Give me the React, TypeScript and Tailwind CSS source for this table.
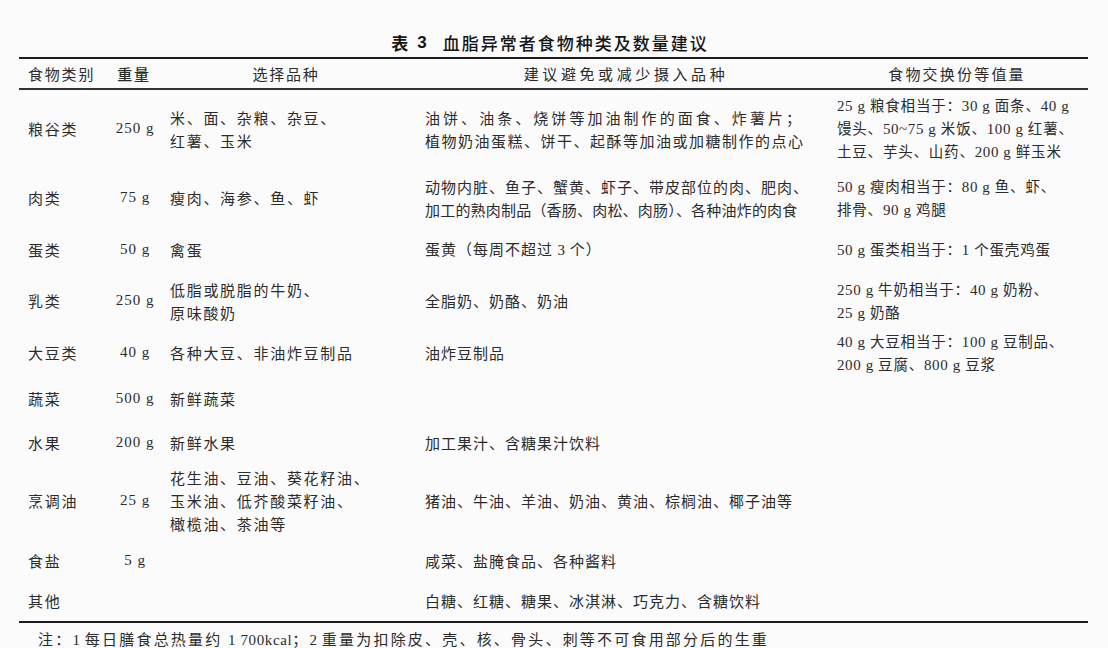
import React from "react";

type L = string | [string, string];

function T({ s }: { s: string }) {
  const parts = s.split(/([0-9][0-9~a-z ]*)/);
  return (
    <>
      {parts.map((p, i) =>
        i % 2 === 1 ? (
          <span key={i} className="font-['Liberation_Serif',serif] text-[15px] tracking-[0.6px]">
            {p}
          </span>
        ) : (
          <span key={i}>{p}</span>
        )
      )}
    </>
  );
}

type Row = {
  h: string;
  cat: string;
  w: string;
  sel: L[];
  av: L[];
  ex: L[];
};

const rows: Row[] = [
  {
    h: "h-[78px]",
    cat: "粮谷类",
    w: "250 g",
    sel: ["米、面、杂粮、杂豆、", "红薯、玉米"],
    av: [
      ["油饼、油条、烧饼等加油制作的面食、炸薯片；", "tracking-[3.05px]"],
      ["植物奶油蛋糕、饼干、起酥等加油或加糖制作的点心", "tracking-[1.5px]"],
    ],
    ex: ["25 g 粮食相当于：30 g 面条、40 g", "馒头、50~75 g 米饭、100 g 红薯、", "土豆、芋头、山药、200 g 鲜玉米"],
  },
  {
    h: "h-[60px]",
    cat: "肉类",
    w: "75 g",
    sel: ["瘦肉、海参、鱼、虾"],
    av: [
      ["动物内脏、鱼子、蟹黄、虾子、带皮部位的肉、肥肉、", "tracking-[1px]"],
      ["加工的熟肉制品（香肠、肉松、肉肠）、各种油炸的肉食", "tracking-[0.2px]"],
    ],
    ex: ["50 g 瘦肉相当于：80 g 鱼、虾、", "排骨、90 g 鸡腿"],
  },
  {
    h: "h-[44px]",
    cat: "蛋类",
    w: "50 g",
    sel: ["禽蛋"],
    av: ["蛋黄（每周不超过 3 个）"],
    ex: ["50 g 蛋类相当于：1 个蛋壳鸡蛋"],
  },
  {
    h: "h-[58px]",
    cat: "乳类",
    w: "250 g",
    sel: ["低脂或脱脂的牛奶、", "原味酸奶"],
    av: ["全脂奶、奶酪、奶油"],
    ex: ["250 g 牛奶相当于：40 g 奶粉、", "25 g 奶酪"],
  },
  {
    h: "h-[42px]",
    cat: "大豆类",
    w: "40 g",
    sel: ["各种大豆、非油炸豆制品"],
    av: ["油炸豆制品"],
    ex: ["40 g 大豆相当于：100 g 豆制品、", "200 g 豆腐、800 g 豆浆"],
  },
  {
    h: "h-[54px]",
    cat: "蔬菜",
    w: "500 g",
    sel: ["新鲜蔬菜"],
    av: [],
    ex: [],
  },
  {
    h: "h-[34px]",
    cat: "水果",
    w: "200 g",
    sel: ["新鲜水果"],
    av: ["加工果汁、含糖果汁饮料"],
    ex: [],
  },
  {
    h: "h-[82px]",
    cat: "烹调油",
    w: "25 g",
    sel: ["花生油、豆油、葵花籽油、", "玉米油、低芥酸菜籽油、", "橄榄油、茶油等"],
    av: ["猪油、牛油、羊油、奶油、黄油、棕榈油、椰子油等"],
    ex: [],
  },
  {
    h: "h-[38px]",
    cat: "食盐",
    w: "5 g",
    sel: [],
    av: ["咸菜、盐腌食品、各种酱料"],
    ex: [],
  },
  {
    h: "h-[41px]",
    cat: "其他",
    w: "",
    sel: [],
    av: ["白糖、红糖、糖果、冰淇淋、巧克力、含糖饮料"],
    ex: [],
  },
];

function Lines({ lines, base }: { lines: L[]; base: string }) {
  return (
    <>
      {lines.map((l, i) =>
        typeof l === "string" ? (
          <div key={i} className={base}>
            <T s={l} />
          </div>
        ) : (
          <div key={i} className={l[1]}>
            <T s={l[0]} />
          </div>
        )
      )}
    </>
  );
}

const grid = "grid grid-cols-[91px_48px_256px_412px_262px]";

export default function App() {
  return (
    <div className="w-[1108px] h-[648px] overflow-hidden bg-[#fbfbfc] text-[#2b2b2b] font-['Noto_Sans_CJK_SC',sans-serif]">
      <div className="h-[57px] pt-[31px] flex justify-center pr-[8px] text-[17px] leading-[24px] text-[#161616]">
        <span className="font-semibold">表</span>
        <span className="ml-[9px] font-['Liberation_Sans',sans-serif] font-semibold">3</span>
        <span className="ml-[16px] tracking-[2px] font-medium">血脂异常者食物种类及数量建议</span>
      </div>
      <div className="ml-[19px] w-[1069px]">
        <div className="h-[2px] bg-[#1c1c1c]" />
        <div className={`${grid} h-[29px] pt-[2px] items-center text-[15px] tracking-[1.8px]`}>
          <div className="pl-[9px]">食物类别</div>
          <div className="text-center font-medium">重量</div>
          <div className="text-center">选择品种</div>
          <div className="text-center pl-[12px] tracking-[3.6px]">建议避免或减少摄入品种</div>
          <div className="text-center tracking-[2.2px]">食物交换份等值量</div>
        </div>
        <div className="h-[1.5px] bg-[#333]" />
        {rows.map((r, i) => (
          <div key={i} className={`${grid} ${r.h} items-center text-[15px] leading-[23px]`}>
            <div className="pl-[9px] tracking-[1.8px]">{r.cat}</div>
            <div className="text-center font-['Liberation_Serif',serif] text-[15px] tracking-[1px] pl-[2px]">{r.w}</div>
            <div className="pl-[12px]">
              <Lines lines={r.sel} base="tracking-[1.7px]" />
            </div>
            <div className="pl-[11px]">
              <Lines lines={r.av} base="tracking-[1px]" />
            </div>
            <div className="pl-[11px] text-[14.5px] leading-[22px]">
              <Lines lines={r.ex} base="tracking-[0.8px]" />
            </div>
          </div>
        ))}
        <div className="h-[2px] bg-[#1c1c1c]" />
      </div>
      <div className="mt-[5px] pl-[38px] text-[15px] leading-[22px] tracking-[2.2px]">
        <T s="注：1 每日膳食总热量约 1 700kcal；2 重量为扣除皮、壳、核、骨头、刺等不可食用部分后的生重" />
      </div>
    </div>
  );
}
